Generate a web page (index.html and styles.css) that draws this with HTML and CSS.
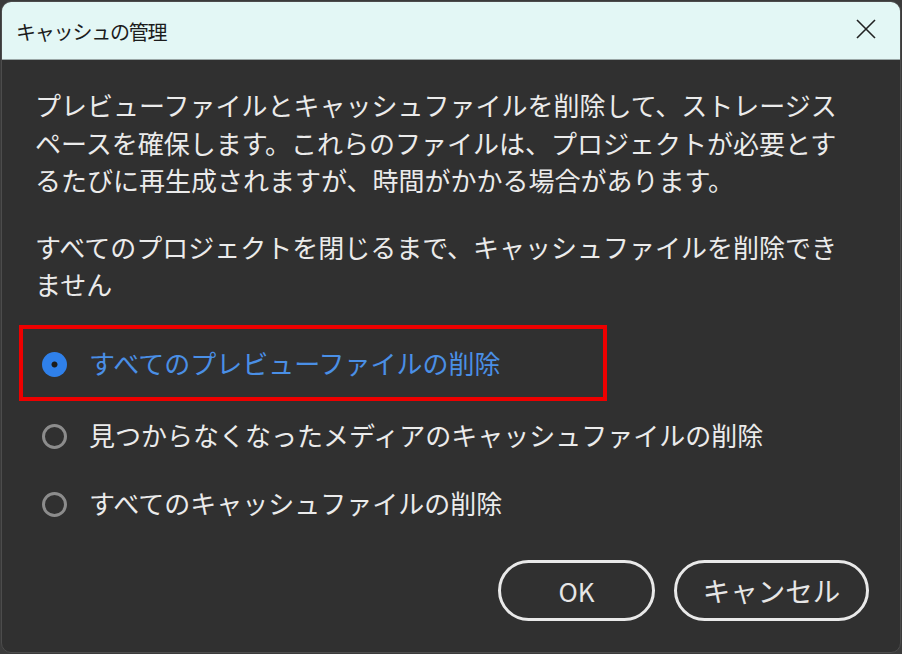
FILE: index.html
```html
<!DOCTYPE html>
<html lang="ja">
<head>
<meta charset="utf-8">
<title>キャッシュの管理</title>
<link rel="stylesheet" href="styles.css">
</head>
<body>
<div class="dialog">
  <div class="titlebar">
    <span class="title">キャッシュの管理</span>
    <svg class="close" width="20" height="20" viewBox="0 0 20 20" aria-hidden="true">
      <path d="M1 1 L19 19 M19 1 L1 19" stroke="#222" stroke-width="1.6" fill="none"/>
    </svg>
  </div>
  <div class="content">
    <p class="para">プレビューファイルとキャッシュファイルを削除して、ストレージスペースを確保します。これらのファイルは、プロジェクトが必要とするたびに再生成されますが、時間がかかる場合があります。</p>
    <p class="para para2">すべてのプロジェクトを閉じるまで、キャッシュファイルを削除できません</p>
    <div class="options">
      <div class="option option-selected highlight">
        <span class="radio radio-on"></span>
        <span class="label">すべてのプレビューファイルの削除</span>
      </div>
      <div class="option">
        <span class="radio"></span>
        <span class="label">見つからなくなったメディアのキャッシュファイルの削除</span>
      </div>
      <div class="option">
        <span class="radio"></span>
        <span class="label">すべてのキャッシュファイルの削除</span>
      </div>
    </div>
    <div class="buttons">
      <button class="btn btn-ok">OK</button>
      <button class="btn btn-cancel">キャンセル</button>
    </div>
  </div>
</div>
</body>
</html>
```
FILE: styles.css
```css
html, body {
  margin: 0;
  padding: 0;
  background: #3b3b3b;
}
body {
  padding: 1px;
  font-family: "Noto Sans CJK JP", "Noto Sans", sans-serif;
}
.dialog {
  width: 898px;
  height: 650px;
  border: 1px solid #4c4c4c;
  border-radius: 10px;
  overflow: hidden;
  background: #303030;
  display: flex;
  flex-direction: column;
}
.titlebar {
  height: 57px;
  flex: 0 0 auto;
  background: #e3f7f5;
  border-bottom: 1px solid #9aa7a6;
  display: flex;
  align-items: center;
  justify-content: space-between;
  padding: 0 24px 0 14px;
}
.title {
  font-size: 20px;
  color: #1c1c1c;
  letter-spacing: -1.2px;
  margin-top: 2px;
}
.close {
  display: block;
  margin-top: -4px;
}
.content {
  flex: 1 1 auto;
  padding: 26px 30px 0 33px;
  color: #ebebeb;
}
.para {
  margin: 0;
  width: 810px;
  font-size: 26px;
  line-height: 37.5px;
  letter-spacing: 0;
}
.para2 {
  margin-top: 29px;
}
.options {
  margin-top: 22px;
  display: flex;
  flex-direction: column;
}
.option {
  height: 68px;
  display: flex;
  align-items: center;
  font-size: 26px;
  line-height: 37.5px;
}
.highlight {
  box-sizing: border-box;
  height: 76px;
  width: 588px;
  margin-left: -16px;
  border: 4px solid #ee0000;
  padding-left: 19px;
}
.option:not(.highlight) {
  padding-left: 7px;
}
.radio {
  width: 25px;
  height: 25px;
  box-sizing: border-box;
  border-radius: 50%;
  border: 3.5px solid #8c8c8c;
  flex: 0 0 auto;
  margin-right: 22px;
  margin-top: 4px;
}
.radio-on {
  border: none;
  background: radial-gradient(circle, #1c1c1c 0 2.6px, #2f80ea 3.4px);
}
.option-selected .label {
  color: #4a8fe6;
}
.buttons {
  margin-top: 23px;
  display: flex;
  justify-content: flex-end;
  gap: 19px;
  padding-right: 1px;
}
.btn {
  height: 61px;
  border: 3px solid #e9e9e9;
  border-radius: 31px;
  background: transparent;
  color: #e6e6e6;
  font-family: "Noto Sans CJK JP", "Noto Sans", sans-serif;
  font-size: 26px;
  padding: 0;
  display: flex;
  align-items: center;
  justify-content: center;
}
.btn-ok {
  width: 157px;
}
.btn-cancel {
  width: 195px;
  font-size: 27.5px;
}
```
